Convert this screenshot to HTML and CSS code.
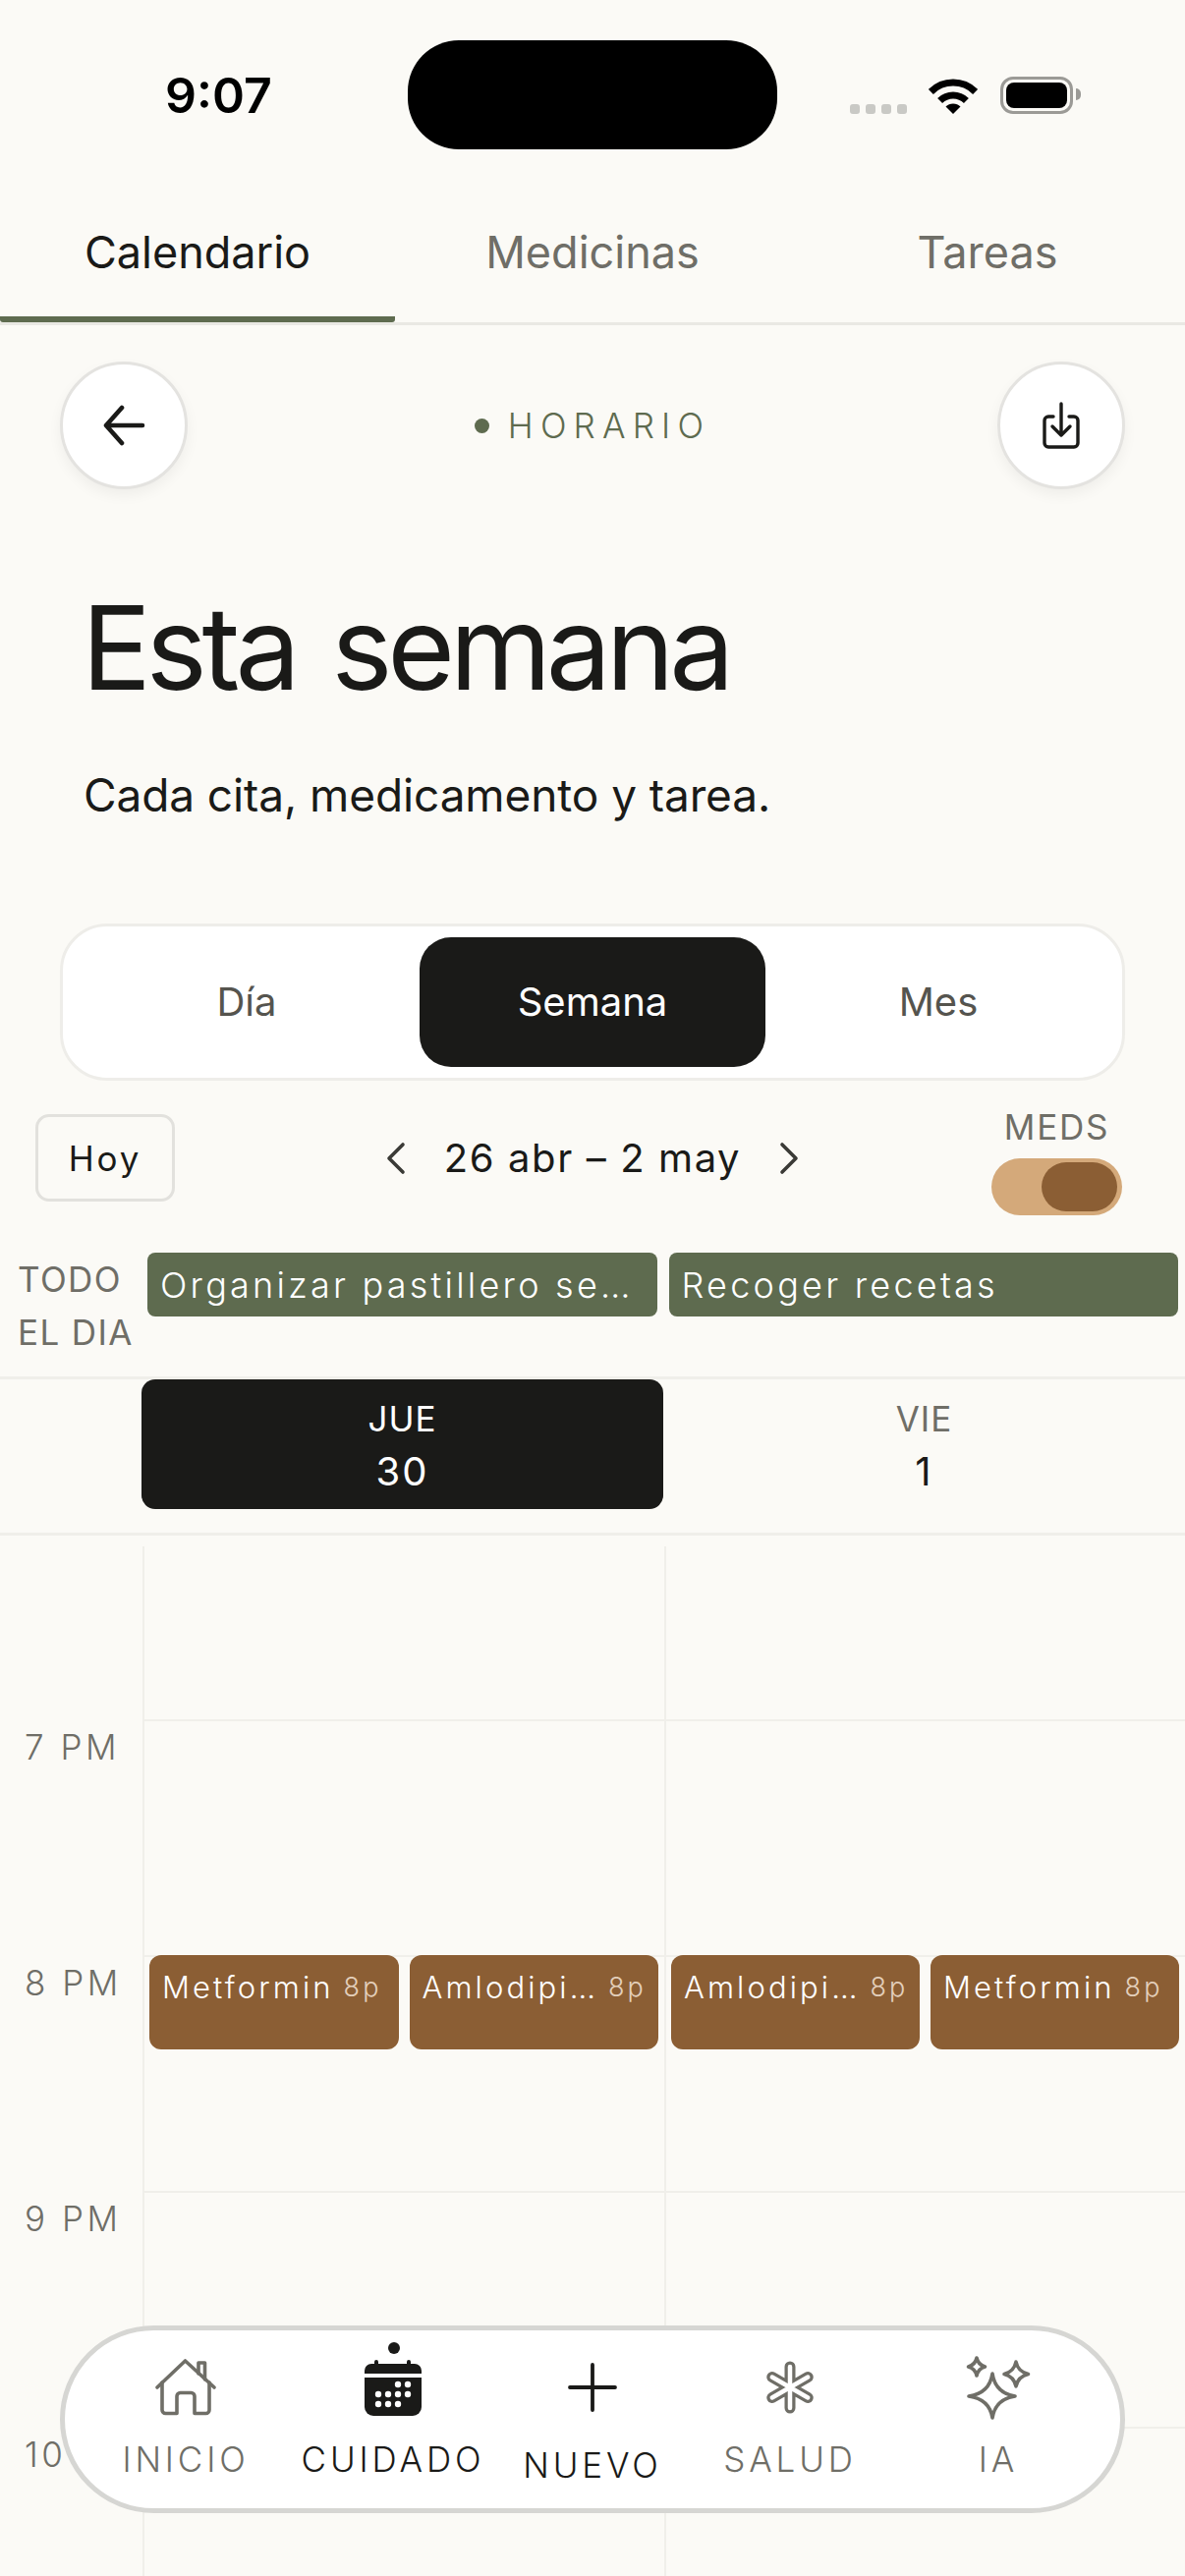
FILE: index.html
```html
<!DOCTYPE html>
<html lang="es">
<head>
    <meta charset="utf-8"/>
    <title>Horario</title>
    <link rel="stylesheet" href="styles.css">
</head>
<body>
<div class="status">
    <span class="clock">9:07</span>
    <div class="island"></div>
    <div class="status-icons">
        <div class="signal"><i></i><i></i><i></i><i></i></div>
        <svg class="wifi" width="50" height="37" viewBox="0 0 50 37">
            <path d="M2.4 14.4A32 32 0 0 1 47.6 14.4M11.6 23.6A19 19 0 0 1 38.4 23.6" fill="none" stroke="#000" stroke-width="7"/>
            <path d="M25 37L17.5 29.5A10.6 10.6 0 0 1 32.5 29.5Z" fill="#000"/>
        </svg>
        <div class="battery"><div class="battery-fill"></div></div>
    </div>
</div>

<div class="tabs">
    <div class="tab active">Calendario</div>
    <div class="tab">Medicinas</div>
    <div class="tab">Tareas</div>
</div>

<div class="topbar">
    <button type="button" class="round-btn">
        <svg width="44" height="42" viewBox="0 0 44 42" fill="none" stroke="#1a1a18" stroke-width="4.600" stroke-linecap="round" stroke-linejoin="round">
            <path d="M41 21H4M20 3L4 21L20 39"/>
        </svg>
    </button>
    <div class="eyebrow"><span class="dot"></span>HORARIO</div>
    <button type="button" class="round-btn">
        <svg width="38" height="48" viewBox="0 0 38 48" fill="none" stroke="#1a1a18" stroke-width="3.4" stroke-linecap="round" stroke-linejoin="round">
            <path d="M11 15H6a4 4 0 0 0-4 4V42a4 4 0 0 0 4 4H32a4 4 0 0 0 4-4V19a4 4 0 0 0-4-4H27"/>
            <path d="M19 2V34M10 25L19 34L28 25"/>
        </svg>
    </button>
</div>

<h1 class="title">Esta semana</h1>
<p class="subtitle">Cada cita, medicamento y tarea.</p>

<div class="segment">
    <div class="segment-item">Día</div>
    <div class="segment-item active">Semana</div>
    <div class="segment-item">Mes</div>
</div>

<div class="toolbar">
    <button type="button" class="today">Hoy</button>
    <div class="range">
        <svg width="20" height="34" viewBox="0 0 20 34" fill="none" stroke="#3a3a36" stroke-width="3.600" stroke-linecap="round" stroke-linejoin="round"><path d="M17 3L3 17L17 31"/></svg>
        <span>26 abr – 2 may</span>
        <svg width="20" height="34" viewBox="0 0 20 34" fill="none" stroke="#3a3a36" stroke-width="3.600" stroke-linecap="round" stroke-linejoin="round"><path d="M3 3L17 17L3 31"/></svg>
    </div>
    <div class="meds">
        <span class="meds-label">MEDS</span>
        <div class="toggle"><div class="thumb"></div></div>
    </div>
</div>

<div class="allday">
    <div class="allday-label">TODO<br>EL DIA</div>
    <div class="allday-events">
        <div class="allday-event">Organizar pastillero se…</div>
        <div class="allday-event">Recoger recetas</div>
    </div>
</div>

<div class="days">
    <div class="day active"><span class="day-name">JUE</span><span class="day-num">30</span></div>
    <div class="day"><span class="day-name">VIE</span><span class="day-num">1</span></div>
</div>

<div class="week">
    <div class="row first">
        <div class="hour"></div>
        <div class="cell"></div>
        <div class="cell"></div>
    </div>
    <div class="row">
        <div class="hour">7 PM</div>
        <div class="cell"></div>
        <div class="cell"></div>
    </div>
    <div class="row">
        <div class="hour">8 PM</div>
        <div class="cell">
            <div class="event"><span class="event-name">Metformin</span><span class="event-time">8p</span></div>
            <div class="event"><span class="event-name">Amlodipi…</span><span class="event-time">8p</span></div>
        </div>
        <div class="cell">
            <div class="event"><span class="event-name">Amlodipi…</span><span class="event-time">8p</span></div>
            <div class="event"><span class="event-name">Metformin</span><span class="event-time">8p</span></div>
        </div>
    </div>
    <div class="row">
        <div class="hour">9 PM</div>
        <div class="cell"></div>
        <div class="cell"></div>
    </div>
    <div class="row">
        <div class="hour">10</div>
        <div class="cell"></div>
        <div class="cell"></div>
    </div>
</div>

<nav class="nav">
    <div class="nav-item">
        <div class="nav-icon">
            <svg width="62" height="58" viewBox="0 0 62 58" fill="none" stroke="#6f6e67" stroke-width="3.6" stroke-linecap="round" stroke-linejoin="round">
                <path d="M2 29L30.500 2L60 29"/>
                <path d="M7 24V52a3.500 3.500 0 0 0 3.500 3.500H22V38a3.500 3.500 0 0 1 3.500-3.500H36.500A3.500 3.500 0 0 1 40 38V55.500H51.500A3.500 3.500 0 0 0 55 52V24"/>
                <path d="M44 15V4H50.500V21"/>
            </svg>
        </div>
        <span class="nav-label">INICIO</span>
    </div>
    <div class="nav-item current">
        <div class="nav-icon">
            <svg class="cal" width="58" height="57" viewBox="0 0 58 57">
                <circle cx="30" cy="-12" r="6" fill="#1a1a18"/>
                <path d="M0 14V11a7 7 0 0 1 7-7H10V2a2 2 0 0 1 4 0V4H43V2a2 2 0 0 1 4 0V4H51a7 7 0 0 1 7 7V14Z" fill="#1a1a18"/>
                <path d="M0 18H58V48a9 9 0 0 1-9 9H9a9 9 0 0 1-9-9Z" fill="#1a1a18"/>
                <g fill="#fff">
                    <circle cx="34" cy="25" r="3.200"/><circle cx="44" cy="25" r="3.200"/>
                    <circle cx="14" cy="35" r="3.200"/><circle cx="24" cy="35" r="3.200"/><circle cx="34" cy="35" r="3.200"/><circle cx="44" cy="35" r="3.200"/>
                    <circle cx="14" cy="45" r="3.200"/><circle cx="24" cy="45" r="3.200"/><circle cx="34" cy="45" r="3.200"/>
                </g>
            </svg>
        </div>
        <span class="nav-label">CUIDADO</span>
    </div>
    <div class="nav-item current">
        <div class="nav-icon">
            <svg width="50" height="50" viewBox="0 0 50 50" fill="none" stroke="#1a1a18" stroke-width="3.800" stroke-linecap="round">
                <path d="M25 2V48M2 25H48"/>
            </svg>
        </div>
        <span class="nav-label low">NUEVO</span>
    </div>
    <div class="nav-item">
        <div class="nav-icon">
            <svg width="50" height="54" viewBox="0 0 50 54" fill="none" stroke-linecap="round">
                <g stroke="#6f6e67" stroke-width="11">
                    <path d="M25 6V48M6.800 16.500L43.200 37.500M6.800 37.500L43.200 16.500"/>
                </g>
                <g stroke="#fff" stroke-width="4.500">
                    <path d="M25 6V48M6.800 16.500L43.200 37.500M6.800 37.500L43.200 16.500"/>
                </g>
            </svg>
        </div>
        <span class="nav-label">SALUD</span>
    </div>
    <div class="nav-item">
        <div class="nav-icon">
            <svg width="66" height="66" viewBox="0 0 66 66" fill="none" stroke="#6f6e67" stroke-width="3.600" stroke-linejoin="round">
                <path d="M27 19Q30 39 50 42Q30 45 27 64Q24 45 3 42Q24 39 27 19Z"/>
                <path d="M11 3Q12.500 10 19.500 12Q12.500 14 11 21Q9.500 14 2.500 12Q9.500 10 11 3Z"/>
                <path d="M51 7Q53 17 63.500 19.500Q53 22 51 32Q49 22 39 19.500Q49 17 51 7Z"/>
            </svg>
        </div>
        <span class="nav-label">IA</span>
    </div>
</nav>
</body>
</html>
```

FILE: styles.css
```css
* {
    box-sizing: border-box;
}

html, body {
    height: 2622px;
    overflow: hidden;
}

body {
    position: relative;
    margin: 0;
    background: #fbfaf6;
    color: #1a1a18;
    font-family: Inter, "Noto Sans", sans-serif;
}

button {
    font-family: inherit;
    outline: 0;
}

/* status bar */
.status {
    position: relative;
    height: 200px;
}

.clock {
    position: absolute;
    left: 168px;
    top: 66px;
    font-size: 50px;
    line-height: 62px;
    font-weight: 600;
    color: #000;
}

.island {
    position: absolute;
    left: 415px;
    top: 41px;
    width: 376px;
    height: 111px;
    border-radius: 52px;
    background: #000;
}

.status-icons {
    position: absolute;
    left: 865px;
    top: 78px;
    display: flex;
    align-items: flex-start;
}

.signal {
    display: flex;
    gap: 6px;
    margin-top: 28px;
    margin-right: 22px;
}

.signal i {
    display: block;
    width: 10px;
    height: 10px;
    border-radius: 3px;
    background: #c9c9c5;
}

.wifi {
    margin-top: 1px;
    margin-right: 23px;
}

.battery {
    position: relative;
    width: 74px;
    height: 38px;
    padding: 3px;
    border: 3px solid #9b9a96;
    border-radius: 13px;
}

.battery:after {
    content: "";
    position: absolute;
    right: -11px;
    top: 9px;
    width: 5px;
    height: 12px;
    border-radius: 0 5px 5px 0;
    background: #9b9a96;
}

.battery-fill {
    height: 100%;
    border-radius: 8px;
    background: #000;
}

/* tabs */
.tabs {
    display: grid;
    grid-template-columns: repeat(3, 1fr);
    height: 131px;
    border-bottom: 3px solid #e9e8e3;
}

.tab {
    padding-top: 27px;
    font-size: 45px;
    line-height: 60px;
    text-align: center;
    color: #6f6e67;
}

.tab.active {
    color: #1a1a18;
    border-bottom: 6px solid #5e6b4f;
    border-radius: 0 0 3px 3px;
}

/* back, title, download */
.topbar {
    display: flex;
    justify-content: space-between;
    align-items: center;
    padding: 37px 61px 0;
}

.round-btn {
    display: flex;
    align-items: center;
    justify-content: center;
    width: 130px;
    height: 130px;
    padding: 0;
    border: 3px solid #e4e3e0;
    border-radius: 50%;
    background: #fff;
    box-shadow: 0 6px 14px rgba(0, 0, 0, 0.05);
}

.eyebrow {
    display: flex;
    align-items: center;
    font-size: 35px;
    letter-spacing: 0.205em;
    color: #5e6b4f;
    font-weight: 300;
}

.dot {
    width: 15px;
    height: 15px;
    margin-right: 19px;
    border-radius: 50%;
    background: #5e6b4f;
}

.title {
    margin: 96px 0 0;
    padding-left: 83px;
    font-size: 118px;
    line-height: 130px;
    font-weight: 400;
    letter-spacing: -0.045em;
    word-spacing: 9px;
}

.subtitle {
    margin: 55px 0 0;
    padding-left: 85px;
    font-size: 46px;
    line-height: 60px;
    letter-spacing: -0.1px;
}

/* day / week / month */
.segment {
    display: grid;
    grid-template-columns: repeat(3, 1fr);
    height: 160px;
    margin: 101px 61px 0;
    padding: 11px;
    border: 3px solid #eeede9;
    border-radius: 48px;
    background: #fff;
}

.segment-item {
    font-size: 40px;
    line-height: 132px;
    text-align: center;
    color: #55544e;
}

.segment-item.active {
    border-radius: 32px;
    background: #1a1a18;
    color: #fff;
}

/* toolbar */
.toolbar {
    display: grid;
    grid-template-columns: 1fr auto 1fr;
    align-items: center;
    margin-top: 20px;
    padding: 0 36px;
}

.today {
    justify-self: start;
    width: 142px;
    height: 89px;
    padding: 0;
    border: 3px solid #e2e1dd;
    border-radius: 14px;
    background: transparent;
    color: #1a1a18;
    font-size: 35px;
    letter-spacing: 0.08em;
}

.range {
    display: flex;
    align-items: center;
    gap: 39px;
    font-size: 40px;
    letter-spacing: 0.04em;
}

.meds {
    justify-self: end;
    margin-right: 28px;
    width: 133px;
    text-align: center;
}

.meds-label {
    display: block;
    margin-bottom: 6px;
    padding-top: 1px;
    font-size: 35px;
    line-height: 52px;
    letter-spacing: 0.05em;
    color: #6f6e67;
}

.toggle {
    height: 58px;
    padding: 4px 5px;
    border-radius: 29px;
    background: #d4a97a;
}

.thumb {
    width: 77px;
    height: 50px;
    margin-left: auto;
    border-radius: 25px;
    background: #8b5e34;
}

/* all day */
.allday {
    display: grid;
    grid-template-columns: 132px 1fr;
    height: 167px;
    padding: 38px 7px 0 18px;
    border-bottom: 3px solid #f0efea;
}

.allday-label {
    font-size: 35px;
    line-height: 54px;
    letter-spacing: 0.04em;
    color: #6f6e67;
}

.allday-events {
    display: grid;
    grid-template-columns: 1fr 1fr;
    gap: 12px;
    align-items: start;
}

.allday-event {
    height: 65px;
    padding: 0 13px;
    white-space: nowrap;
    border-radius: 8px;
    background: #5e6b4f;
    color: #fff;
    font-size: 36px;
    line-height: 67px;
    letter-spacing: 0.09em;
    font-weight: 300;
}

/* day header */
.days {
    display: grid;
    grid-template-columns: 531px 531px;
    padding-left: 144px;
    height: 159px;
    border-bottom: 3px solid #f0efea;
}

.day {
    display: flex;
    flex-direction: column;
    align-items: center;
    justify-content: center;
    height: 132px;
    padding-top: 1px;
    border-radius: 14px;
}

.day.active {
    background: #1a1a18;
    color: #fff;
}

.day-name {
    font-size: 35px;
    line-height: 54px;
    letter-spacing: 0.03em;
    color: #6f6e67;
}

.day.active .day-name {
    color: #fff;
}

.day-num {
    font-size: 40px;
    line-height: 54px;
    letter-spacing: 0.05em;
}

/* week grid */
.week {
    margin-top: 11px;
}

.row {
    display: grid;
    grid-template-columns: 145px 531px 1fr;
    height: 240px;
}

.row.first {
    height: 176px;
}

.hour {
    padding: 8px 0 0 25px;
    font-size: 35px;
    line-height: 40px;
    letter-spacing: 0.1em;
    font-weight: 300;
    color: #6f6e67;
}

.cell {
    display: grid;
    grid-template-columns: minmax(0, 1fr) minmax(0, 1fr);
    gap: 11px;
    align-items: start;
    padding: 0 6px 0 5px;
    border-left: 2px solid #f0efea;
    border-top: 2px solid #f0efea;
}

.row.first .cell {
    border-top: 0;
}

.event {
    display: flex;
    gap: 10px;
    height: 96px;
    margin-top: -2px;
    padding: 14px 10px 0 13px;
    border-radius: 12px;
    background: #8b5e34;
    color: #fff;
    font-size: 31px;
    line-height: 38px;
    letter-spacing: 0.1em;
    font-weight: 300;
}

.event-name {
    white-space: nowrap;
}

.event-time {
    flex: none;
    font-size: 27px;
    color: #e3cfbb;
}

/* bottom nav */
.nav {
    position: absolute;
    left: 61px;
    right: 61px;
    bottom: 64px;
    display: grid;
    grid-template-columns: 212px 210px 196px 206px 218px;
    height: 191px;
    padding: 25px 0 0 17px;
    border: 5px solid #d6d6d3;
    border-radius: 96px;
    background: #fff;
}

.nav-item {
    display: flex;
    flex-direction: column;
    align-items: center;
    color: #6f6e67;
}

.nav-item.current {
    color: #1a1a18;
}

.nav-icon {
    display: flex;
    align-items: center;
    justify-content: center;
    height: 66px;
    margin-bottom: 20px;
}

.cal {
    overflow: visible;
}

.nav-label {
    font-size: 35px;
    line-height: 40px;
    letter-spacing: 0.11em;
    font-weight: 300;
    white-space: nowrap;
}

.nav-label.low {
    margin-top: 6px;
}
```
